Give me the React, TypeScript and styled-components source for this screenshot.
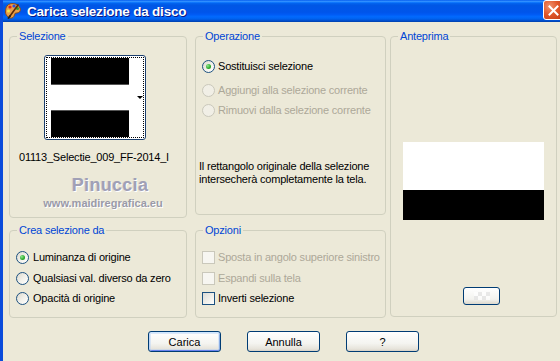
import React from "react";
import styled, { createGlobalStyle } from "styled-components";

const Colors = {
  face: "#ECE9D8",
  groupBorder: "#D0D0BF",
  legend: "#0046D5",
  disabled: "#ACA899",
  navy: "#003C74",
  radioBorder: "#1C5180",
};

const GlobalStyle = createGlobalStyle`
  html, body {
    margin: 0;
    padding: 0;
    background: ${Colors.face};
    overflow: hidden;
  }
  body {
    font-family: "Liberation Sans", Arial, sans-serif;
    font-size: 11px;
    letter-spacing: -0.2px;
  }
`;

const Window = styled.div`
  width: 560px;
  height: 361px;
  box-sizing: border-box;
  border-left: 3px solid #0A4BDB;
  background: ${Colors.face};
  overflow: hidden;
  display: flex;
  flex-direction: column;
`;

const TitleBar = styled.div`
  height: 22px;
  flex: none;
  display: flex;
  align-items: center;
  background: linear-gradient(
    to bottom,
    #0058ee 0%,
    #3593ff 6%,
    #127dff 10%,
    #0262ee 16%,
    #0057e5 24%,
    #0055eb 56%,
    #005bf5 66%,
    #026afe 76%,
    #0062ef 86%,
    #0052d6 92%,
    #0040ab 100%
  );
  padding-left: 1px;
`;

const TitleText = styled.span`
  flex: 1;
  margin-left: 5px;
  color: #fff;
  font-family: "Liberation Sans", Arial, sans-serif;
  font-weight: bold;
  font-size: 13.5px;
  letter-spacing: -0.2px;
  text-shadow: 1px 1px 0 #0a1883;
`;

const CloseButton = styled.div`
  width: 21px;
  height: 20px;
  margin-right: -4px;
  margin-top: -2px;
  box-sizing: border-box;
  border: 1px solid #fff;
  border-radius: 3px;
  background: radial-gradient(circle at 30% 30%, #f0936f 0%, #e0562a 45%, #c13a14 100%);
  display: flex;
  align-items: center;
  justify-content: center;
`;

const Body = styled.div`
  flex: 1;
  padding: 8px 0 0 6px;
  display: flex;
  flex-direction: column;
`;

const Columns = styled.div`
  display: flex;
  align-items: flex-start;
`;

const Column = styled.div<{ $w: number; $mr?: number }>`
  width: ${(p) => p.$w}px;
  margin-right: ${(p) => p.$mr ?? 0}px;
  height: 288px;
  display: flex;
  flex-direction: column;
  justify-content: space-between;
`;

const Group = styled.fieldset<{ $h: number }>`
  margin: 0;
  padding: 0;
  min-width: 0;
  box-sizing: border-box;
  height: ${(p) => p.$h}px;
  border: 1px solid ${Colors.groupBorder};
  border-radius: 4px;
`;

const Legend = styled.legend`
  margin-left: 7px;
  padding: 0 2px;
  color: ${Colors.legend};
  font-size: 11px;
  line-height: 13px;
`;

const Content = styled.div<{ $pt: number; $pl: number }>`
  display: flex;
  flex-direction: column;
  padding-top: ${(p) => p.$pt}px;
  padding-left: ${(p) => p.$pl}px;
`;

const ThumbFrame = styled.div`
  width: 102px;
  height: 85px;
  margin-left: 34px;
  box-sizing: border-box;
  border: 1px solid #1c3f6e;
  border-radius: 3px;
  padding: 1px;
  background: #fff;
`;

const FocusRect = styled.div`
  height: 100%;
  box-sizing: border-box;
  border: 1px dotted #000;
  display: flex;
  align-items: center;
  padding: 0 0 0 4px;
  background: #fff;
`;

const ThumbImage = styled.div`
  width: 78px;
  height: 79px;
  display: flex;
  flex-direction: column;
`;

const Stripe = styled.div<{ $h: number; $color: string; $edge?: "top" | "bottom" }>`
  height: ${(p) => p.$h}px;
  background: ${(p) => p.$color};
  ${(p) => (p.$edge === "bottom" ? "border-bottom: 1px solid #555;" : "")}
  ${(p) => (p.$edge === "top" ? "border-top: 1px solid #555;" : "")}
`;

const DropArrow = styled.div`
  margin-left: 8px;
  width: 0;
  height: 0;
  border-left: 3px solid transparent;
  border-right: 3px solid transparent;
  border-top: 3px solid #000;
`;

const FileName = styled.div`
  margin-top: 11px;
  padding-left: 9px;
  width: 150px;
  white-space: nowrap;
  overflow: hidden;
  line-height: 13px;
  color: #000;
`;

const Watermark = styled.div`
  margin-top: 11px;
  padding-left: 24px;
  text-align: center;
  font-family: "Liberation Sans", Arial, sans-serif;
  font-weight: bold;
  font-size: 18px;
  letter-spacing: 0.3px;
  line-height: 20px;
  color: #a0a0b6;
  text-shadow: 1px 1px 0 #fff, -1px 0 0 #d8d6ca;
`;

const WatermarkUrl = styled.div`
  margin-top: 2px;
  padding-left: 10px;
  text-align: center;
  font-weight: bold;
  font-size: 11px;
  letter-spacing: 0;
  line-height: 12px;
  color: #9a9aa8;
  text-shadow: 1px 1px 0 #fff;
`;

const OptionRow = styled.div<{ $mt: number; $pl?: number }>`
  display: flex;
  align-items: center;
  height: 13px;
  margin-top: ${(p) => p.$mt}px;
  padding-left: ${(p) => p.$pl ?? 0}px;
`;

const Label = styled.span<{ $disabled?: boolean; $gap?: number }>`
  margin-left: ${(p) => p.$gap ?? 3}px;
  color: ${(p) => (p.$disabled ? Colors.disabled : "#000")};
  white-space: nowrap;
  line-height: 13px;
`;

const Radio = styled.span<{ $checked?: boolean; $disabled?: boolean }>`
  width: 13px;
  height: 13px;
  flex: none;
  box-sizing: border-box;
  border-radius: 50%;
  border: 1px solid ${(p) => (p.$disabled ? "#CAC8BB" : Colors.radioBorder)};
  background: ${(p) =>
    p.$disabled
      ? "#F1EFE6"
      : "linear-gradient(135deg, #DCD9CD 0%, #F3F2EC 55%, #FFFFFF 100%)"};
  display: flex;
  align-items: center;
  justify-content: center;
  &::after {
    content: "";
    display: ${(p) => (p.$checked ? "block" : "none")};
    width: 5px;
    height: 5px;
    border-radius: 50%;
    background: radial-gradient(circle at 35% 35%, #8ee88e 0%, #2aa82a 60%, #1a8a1a 100%);
  }
`;

const Checkbox = styled.span<{ $disabled?: boolean }>`
  width: 13px;
  height: 13px;
  flex: none;
  box-sizing: border-box;
  border: 1px solid ${(p) => (p.$disabled ? "#CAC8BB" : Colors.radioBorder)};
  background: ${(p) =>
    p.$disabled ? "#F7F6F1" : "linear-gradient(135deg, #DCDCD7 0%, #F2F1EC 60%, #FFFFFF 100%)"};
`;

const Paragraph = styled.p`
  margin: 43px 0 0 0;
  padding-left: 3px;
  line-height: 13px;
  color: #000;
`;

const Preview = styled.div`
  margin: 99px auto 0 auto;
  width: 141px;
  display: flex;
  flex-direction: column;
`;

const PreviewButton = styled.div`
  margin: 67px 0 0 72px;
  width: 37px;
  height: 18px;
  box-sizing: border-box;
  border: 1px solid ${Colors.navy};
  border-radius: 3px;
  background: linear-gradient(to bottom, #ffffff 0%, #f3f3ef 70%, #dcd8cc 100%);
  display: flex;
  align-items: center;
  justify-content: center;
`;

const Checker = styled.span`
  width: 16px;
  height: 8px;
  opacity: 0.7;
  background-color: #fff;
  background-image: conic-gradient(#e2e2e2 25%, #fff 0 50%, #e2e2e2 0 75%, #fff 0);
  background-size: 8px 8px;
`;

const ButtonRow = styled.div`
  display: flex;
  gap: 26px;
  margin-top: 13px;
  padding-left: 139px;
`;

const PushButton = styled.button<{ $default?: boolean }>`
  width: 73px;
  height: 21px;
  padding: 0;
  box-sizing: border-box;
  border: 1px solid ${Colors.navy};
  border-radius: 3px;
  font-family: "Liberation Sans", Arial, sans-serif;
  font-size: 11px;
  color: #000;
  background: linear-gradient(to bottom, #ffffff 0%, #f4f4f0 60%, #e6e3da 90%, #d6d0c5 100%);
  box-shadow: ${(p) =>
    p.$default
      ? "inset 0 1px 0 #cee7ff, inset 1px 0 0 #bcd4f6, inset -1px 0 0 #89ade4, inset 0 -1px 0 #6982ee, inset 0 0 0 2px rgba(188,212,246,0.5)"
      : "none"};
`;

const PaletteIcon = () => (
  <svg width="18" height="18" viewBox="0 0 18 18">
    <path
      d="M3 4 C6 0 14 1 16 6 C17.5 10 14 11 12 11 C10 11 11 14 9 15.5 C6 17.5 1.5 14 1.5 10 C1.5 7.5 2 5.5 3 4 Z"
      fill="#e8a04a"
      stroke="#8a4a18"
      strokeWidth="1"
    />
    <circle cx="6" cy="5" r="1.6" fill="#d22" />
    <circle cx="10" cy="4" r="1.6" fill="#2a4fd8" />
    <circle cx="13.5" cy="6.5" r="1.5" fill="#2c9c2c" />
    <circle cx="4.5" cy="9" r="1.5" fill="#f7e24a" />
    <path d="M6 14 L14 3" stroke="#5a2a0a" strokeWidth="1.6" strokeLinecap="round" />
    <path d="M6 14 L4.5 16" stroke="#222" strokeWidth="2" strokeLinecap="round" />
  </svg>
);

const CloseIcon = () => (
  <svg width="11" height="11" viewBox="0 0 11 11">
    <path d="M1.5 1.5 L9.5 9.5 M9.5 1.5 L1.5 9.5" stroke="#fff" strokeWidth="2" strokeLinecap="square" />
  </svg>
);

export default function App() {
  return (
    <>
      <GlobalStyle />
      <Window>
        <TitleBar>
          <PaletteIcon />
          <TitleText>Carica selezione da disco</TitleText>
          <CloseButton>
            <CloseIcon />
          </CloseButton>
        </TitleBar>
        <Body>
          <Columns>
            <Column $w={178} $mr={8}>
              <Group $h={188}>
                <Legend>Selezione</Legend>
                <Content $pt={12} $pl={0}>
                  <ThumbFrame>
                    <FocusRect>
                      <ThumbImage>
                        <Stripe $h={27} $color="#000" $edge="bottom" />
                        <Stripe $h={25} $color="#fff" />
                        <Stripe $h={27} $color="#000" $edge="top" />
                      </ThumbImage>
                      <DropArrow />
                    </FocusRect>
                  </ThumbFrame>
                  <FileName>01113_Selectie_009_FF-2014_I</FileName>
                  <Watermark>Pinuccia</Watermark>
                  <WatermarkUrl>www.maidiregrafica.eu</WatermarkUrl>
                </Content>
              </Group>
              <Group $h={94}>
                <Legend>Crea selezione da</Legend>
                <Content $pt={0} $pl={6}>
                  <OptionRow $mt={14}>
                    <Radio $checked />
                    <Label $gap={4}>Luminanza di origine</Label>
                  </OptionRow>
                  <OptionRow $mt={8}>
                    <Radio />
                    <Label $gap={4}>Qualsiasi val. diverso da zero</Label>
                  </OptionRow>
                  <OptionRow $mt={7}>
                    <Radio />
                    <Label $gap={4}>Opacità di origine</Label>
                  </OptionRow>
                </Content>
              </Group>
            </Column>
            <Column $w={191} $mr={4}>
              <Group $h={185}>
                <Legend>Operazione</Legend>
                <Content $pt={0} $pl={0}>
                  <OptionRow $mt={17} $pl={6}>
                    <Radio $checked />
                    <Label>Sostituisci selezione</Label>
                  </OptionRow>
                  <OptionRow $mt={11} $pl={6}>
                    <Radio $disabled />
                    <Label $disabled>Aggiungi alla selezione corrente</Label>
                  </OptionRow>
                  <OptionRow $mt={7} $pl={6}>
                    <Radio $disabled />
                    <Label $disabled>Rimuovi dalla selezione corrente</Label>
                  </OptionRow>
                  <Paragraph>
                    Il rettangolo originale della selezione
                    <br />
                    intersecherà completamente la tela.
                  </Paragraph>
                </Content>
              </Group>
              <Group $h={94}>
                <Legend>Opzioni</Legend>
                <Content $pt={0} $pl={6}>
                  <OptionRow $mt={14}>
                    <Checkbox $disabled />
                    <Label $disabled>Sposta in angolo superiore sinistro</Label>
                  </OptionRow>
                  <OptionRow $mt={8}>
                    <Checkbox $disabled />
                    <Label $disabled>Espandi sulla tela</Label>
                  </OptionRow>
                  <OptionRow $mt={7}>
                    <Checkbox />
                    <Label>Inverti selezione</Label>
                  </OptionRow>
                </Content>
              </Group>
            </Column>
            <Column $w={167}>
              <Group $h={287}>
                <Legend>Anteprima</Legend>
                <Content $pt={0} $pl={0}>
                  <Preview>
                    <Stripe $h={48} $color="#fff" />
                    <Stripe $h={30} $color="#000" />
                  </Preview>
                  <PreviewButton>
                    <Checker />
                  </PreviewButton>
                </Content>
              </Group>
            </Column>
          </Columns>
          <ButtonRow>
            <PushButton $default>Carica</PushButton>
            <PushButton>Annulla</PushButton>
            <PushButton>?</PushButton>
          </ButtonRow>
        </Body>
      </Window>
    </>
  );
}
